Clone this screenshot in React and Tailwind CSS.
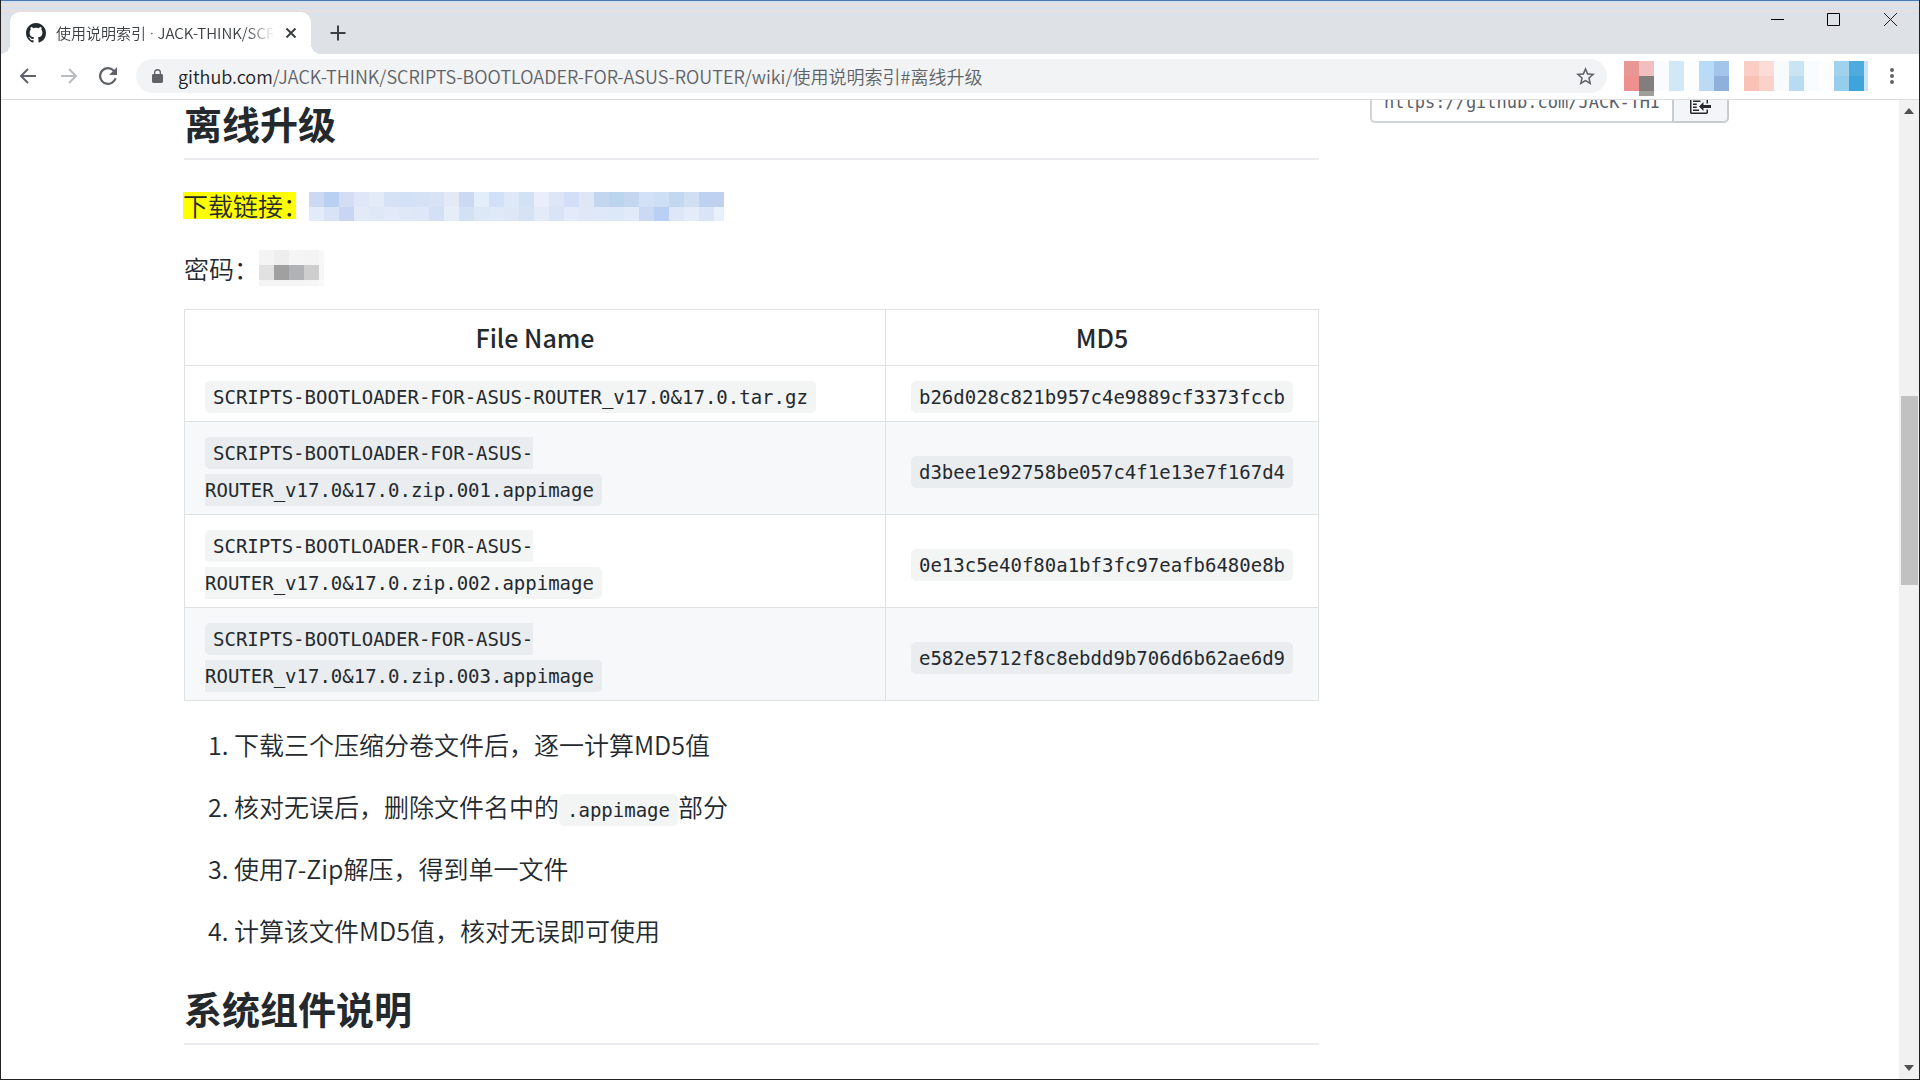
import React from "react";

const LINK_MOSAIC = [
  ["#cbdaf2", "#b9d0f2", "#d3def5", "#dee6f7", "#e4ebf8", "#d5e2f6", "#d3e1f7", "#d5e2f6", "#d8e4f5", "#e5e9f6", "#cbdaf2", "#e4edfa", "#d3e1f8", "#dfe8f8", "#d3e1f4", "#e9eefa", "#dde5f6", "#d3dff7", "#dfe7f7", "#c3d6f0", "#bcd5ef", "#c5d7f0", "#d3e1f7", "#cddff5", "#c2d8f1", "#d1dff4", "#bfd1f1", "#bfd1ef"],
  ["#e4ebf8", "#d9e3f6", "#c8d6f3", "#e2e9f7", "#dfe8f6", "#e2e9f8", "#dfe8f7", "#dee7f7", "#d3e0f5", "#e5edf9", "#d3e1f5", "#dde8f7", "#dfe9f7", "#dde7f6", "#d6e3f4", "#e3ebf8", "#d9e4f6", "#e3eaf9", "#e0e8f8", "#dfe8f8", "#dce7f7", "#e1eaf8", "#ccd9f4", "#b9cff3", "#dde7f7", "#e4ecf9", "#d9e5f7", "#e8f0fb"],
];

const PASSWORD_MOSAIC = [
  ["#f4f4f5", "#eeeeef", "#f5f5f5", "#f4f4f4", "#f8f8f8"],
  ["#e1e1e1", "#a0a0a0", "#b0b3b5", "#cecece", "#f6f6f6"],
  ["#f5f5f5", "#f5f5f5", "#f5f5f5", "#f6f6f6", "#f9f9f9"],
];

const EXTENSIONS = [
  ["#e99795", "#ef8f8e"],
  ["#f1bfbf", "#827e7d", "#9f9f9c"],
  ["#f9fbfe", "#f9fbfe"],
  ["#d3e8f7", "#d3e8f7"],
  ["#fcfdff", "#fcfdff"],
  ["#b9dbfa", "#bcdaf4"],
  ["#a3c5ea", "#8fb0da"],
  ["#ffffff", "#ffffff"],
  ["#fbcdc5", "#fac2b7"],
  ["#fbdcd6", "#fad2ca"],
  ["#f7fbfe", "#f7fbfe"],
  ["#c9e5f4", "#b7dcf2"],
  ["#f9fcfe", "#f9fcfe"],
  ["#fdfdff", "#fdfdff"],
  ["#a0d1ed", "#96cdec"],
  ["#4eabdd", "#40a4dc"],
];

const FILES = [
  ["SCRIPTS-BOOTLOADER-FOR-ASUS-ROUTER_v17.0&17.0.tar.gz", "b26d028c821b957c4e9889cf3373fccb"],
  ["SCRIPTS-BOOTLOADER-FOR-ASUS-ROUTER_v17.0&17.0.zip.001.appimage", "d3bee1e92758be057c4f1e13e7f167d4"],
  ["SCRIPTS-BOOTLOADER-FOR-ASUS-ROUTER_v17.0&17.0.zip.002.appimage", "0e13c5e40f80a1bf3fc97eafb6480e8b"],
  ["SCRIPTS-BOOTLOADER-FOR-ASUS-ROUTER_v17.0&17.0.zip.003.appimage", "e582e5712f8c8ebdd9b706d6b62ae6d9"],
];

const GITHUB_MARK =
  "M8 0C3.58 0 0 3.58 0 8c0 3.54 2.29 6.53 5.47 7.59.4.07.55-.17.55-.38 0-.19-.01-.82-.01-1.49-2.01.37-2.53-.49-2.69-.94-.09-.23-.48-.94-.82-1.13-.28-.15-.68-.52-.01-.53.63-.01 1.08.58 1.23.82.72 1.21 1.87.87 2.33.66.07-.52.28-.87.51-1.07-1.78-.2-3.64-.89-3.64-3.95 0-.87.31-1.59.82-2.15-.08-.2-.36-1.02.08-2.12 0 0 .67-.21 2.2.82.64-.18 1.32-.27 2-.27s1.36.09 2 .27c1.53-1.04 2.2-.82 2.2-.82.44 1.1.16 1.92.08 2.12.51.56.82 1.27.82 2.15 0 3.07-1.87 3.75-3.65 3.95.29.25.54.73.54 1.48 0 1.07-.01 1.93-.01 2.2 0 .21.15.46.55.38A8.01 8.01 0 0 0 16 8c0-4.42-3.58-8-8-8z";

function Mosaic({ rows, label, className }) {
  return (
    <span role="img" aria-label={label} className={`flex flex-col ${className}`}>
      {rows.map((row, r) => (
        <span key={r} className="flex h-[15px] last:h-auto last:flex-1">
          {row.map((color, c) => (
            <span key={c} className="w-[15px] last:flex-1" style={{ backgroundColor: color }} />
          ))}
        </span>
      ))}
    </span>
  );
}

function Code({ children }) {
  return (
    <code className="rounded-[5px] bg-[#1b1f23]/5 px-2 py-[5px] font-['DejaVu_Sans_Mono','Liberation_Mono',monospace] text-[19px] leading-none font-normal">
      {children}
    </code>
  );
}

function Heading({ children }) {
  return (
    <h2 className="border-b-2 border-[#eaecef] pb-[13px] text-[38px] leading-[45px] font-bold">{children}</h2>
  );
}

function TitleBar() {
  return (
    <header className="flex h-[54px] shrink-0 bg-[linear-gradient(#4a7aad_0_1px,#cfe0f1_1px_3px,#e4dfe1_3px_7px,#d3e2f0_7px_9px,#e4dfe1_9px_13px,#d6e2ee_13px_15px,#dee1e6_15px)] pl-[9px]">
      <div className="relative mt-3 flex w-[301px] items-center rounded-t-[10px] bg-white pl-4">
        <span className="absolute bottom-0 -left-[10px] size-[10px] bg-[radial-gradient(circle_at_0_0,transparent_10px,#fff_10px)]" />
        <span className="absolute -right-[10px] bottom-0 size-[10px] bg-[radial-gradient(circle_at_100%_0,transparent_10px,#fff_10px)]" />
        <svg viewBox="0 0 16 16" className="size-5 shrink-0" fill="#24292e"><path d={GITHUB_MARK} /></svg>
        <span className="ml-[10px] w-[218px] overflow-hidden mask-[linear-gradient(90deg,#000_190px,transparent_218px)] text-[15px] leading-6 whitespace-nowrap text-[#3c4043]">
          使用说明索引<span className="font-['Noto_Sans',sans-serif]"> · </span>JACK-THINK/SCRIPTS
        </span>
        <button aria-label="关闭标签页" className="ml-3">
          <svg viewBox="0 0 10 10" className="size-[10px]" stroke="#3c4043" strokeWidth="2"><path d="M0.5 0.5l9 9M9.5 0.5l-9 9" /></svg>
        </button>
      </div>
      <button aria-label="打开新标签页" className="mt-[11px] ml-[19px]">
        <svg viewBox="0 0 16 16" className="size-4" stroke="#3c4043" strokeWidth="2"><path d="M8 0.5v15M0.5 8h15" /></svg>
      </button>
      <div className="ml-auto flex h-[38px] items-center">
        <button aria-label="最小化" className="flex h-full w-[56px] items-center justify-center">
          <svg viewBox="0 0 13 13" className="size-[13px]"><path d="M0 6.5h13" stroke="#000" /></svg>
        </button>
        <button aria-label="最大化" className="flex h-full w-[56px] items-center justify-center">
          <svg viewBox="0 0 13 13" className="size-[13px]" fill="none"><path d="M0.5 0.5h12v12h-12z" stroke="#000" /></svg>
        </button>
        <button aria-label="关闭" className="flex h-full w-[58px] items-center justify-center">
          <svg viewBox="0 0 13 13" className="size-[13px]"><path d="M0 0l13 13M13 0L0 13" stroke="#222" /></svg>
        </button>
      </div>
    </header>
  );
}

function Toolbar() {
  return (
    <div className="flex h-[46px] shrink-0 items-center border-b border-[#dadce0] bg-white pb-px pl-[18px]">
      <button aria-label="后退">
        <svg viewBox="0 0 18 16" className="h-4 w-[18px]" fill="none" stroke="#5f6368" strokeWidth="2"><path d="M17 8H2M9 1L2 8l7 7" /></svg>
      </button>
      <button aria-label="前进" className="ml-[23px]" disabled>
        <svg viewBox="0 0 18 16" className="h-4 w-[18px]" fill="none" stroke="#b9bbbe" strokeWidth="2"><path d="M1 8h15M9 1l7 7-7 7" /></svg>
      </button>
      <button aria-label="重新加载" className="ml-[21px]">
        <svg viewBox="4 4 16 16" className="size-[18px]" fill="#5f6368"><path d="M17.65 6.35A7.96 7.96 0 0 0 12 4a8 8 0 1 0 7.73 10h-2.08A6 6 0 1 1 12 6c1.66 0 3.14.69 4.22 1.78L13 11h7V4l-2.35 2.35z" /></svg>
      </button>
      <div className="ml-[19px] flex h-[34px] min-w-0 flex-1 items-center rounded-full bg-[#f1f3f4] pr-3 pl-4">
        <svg viewBox="0 0 11 14" className="h-[14px] w-[11px] shrink-0" fill="#5f6368"><path d="M9.5 5H9V3.6a3.5 3.5 0 0 0-7 0V5h-.5A1.4 1.4 0 0 0 0 6.4V12.6A1.4 1.4 0 0 0 1.4 14h8.2A1.4 1.4 0 0 0 11 12.6V6.4A1.4 1.4 0 0 0 9.5 5zM3.3 5V3.6a2.2 2.2 0 0 1 4.4 0V5z" /></svg>
        <a href="#离线升级" className="ml-[15px] flex-1 truncate text-[18px] leading-[26px] text-[#5f6368]">
          <span className="text-[#202124]">github.com</span>/JACK-THINK/SCRIPTS-BOOTLOADER-FOR-ASUS-ROUTER/wiki/使用说明索引#离线升级
        </a>
        <button aria-label="为此标签页添加书签">
          <svg viewBox="2 2 20 19" className="h-[18px] w-[19px]" fill="#5f6368"><path d="M22 9.24l-7.19-.62L12 2 9.19 8.63 2 9.24l5.46 4.73L5.82 21 12 17.27 18.18 21l-1.63-7.03L22 9.24zM12 15.4l-3.76 2.27 1-4.28-3.32-2.88 4.38-.38L12 6.1l1.71 4.04 4.38.38-3.32 2.88 1 4.28L12 15.4z" /></svg>
        </button>
      </div>
      <div className="ml-[17px] flex h-[30px]" role="img" aria-label="扩展程序">
        {EXTENSIONS.map((cells, i) => (
          <span key={i} className="flex w-[15px] flex-col">
            {cells.map((color, j) => (
              <span key={j} className="h-[15px] shrink-0 nth-3:h-[5px]" style={{ backgroundColor: color }} />
            ))}
          </span>
        ))}
        <span className="w-1 bg-[#c9e5f6]" />
      </div>
      <button aria-label="菜单" className="mr-[25px] ml-[22px]">
        <svg viewBox="0 0 4 16" className="h-4 w-1" fill="#5f6368"><circle cx="2" cy="2" r="2" /><circle cx="2" cy="8" r="2" /><circle cx="2" cy="14" r="2" /></svg>
      </button>
    </div>
  );
}

function FileTable() {
  return (
    <table className="mt-[23px] w-full table-fixed border-collapse">
      <colgroup><col className="w-auto" /><col className="w-[433px]" /></colgroup>
      <thead>
        <tr>
          <th className="border border-[#dfe2e5] px-5 py-[9px] font-medium">File Name</th>
          <th className="border border-[#dfe2e5] px-5 py-[9px] font-medium">MD5</th>
        </tr>
      </thead>
      <tbody>
        {FILES.map(([name, md5]) => (
          <tr key={md5} className="even:bg-[#f6f8fa]">
            <td className="border border-[#dfe2e5] px-5 py-[9px]"><Code>{name}</Code></td>
            <td className="border border-[#dfe2e5] px-5 py-[9px] text-center"><Code>{md5}</Code></td>
          </tr>
        ))}
      </tbody>
    </table>
  );
}

function CloneBox() {
  return (
    <aside className="-mt-3 flex h-[35px] w-[359px] shrink-0">
      <input
        readOnly
        aria-label="克隆地址"
        value="https://github.com/JACK-THINK/SCRIPTS-BOOTLOADER-FOR-ASUS-ROUTER.wiki.git"
        className="min-w-0 flex-1 rounded-bl-[5px] border-2 border-r-0 border-[#d1d5da] bg-white px-3 pb-[6px] font-['DejaVu_Sans_Mono','Liberation_Mono',monospace] text-[17px] font-normal text-[#586069]"
      />
      <button aria-label="复制" className="flex w-[57px] items-center justify-center rounded-br-[5px] border-2 border-[#c9cccf] bg-[#f3f5f8] pb-2">
        <svg viewBox="0 0 14 16" className="h-6 w-[21px]" fill="#24292e"><path fillRule="evenodd" d="M2 13h4v1H2v-1zm5-6H2v1h5V7zm2 3V8l-3 3 3 3v-2h5v-2H9zM4.5 9H2v1h2.500V9zM2 12h2.500v-1H2v1zm9 1h1v2c-.02.28-.11.52-.3.7-.19.18-.42.28-.7.3H1c-.55 0-1-.45-1-1V4c0-.55.45-1 1-1h3c0-1.110.89-2 2-2 1.110 0 2 .89 2 2h3c.55 0 1 .45 1 1v5h-1V6H1v9h10v-2zM2 5h8c0-.55-.45-1-1-1H8c-.55 0-1-.45-1-1s-.45-1-1-1-1 .45-1 1-.45 1-1 1H3c-.55 0-1 .45-1 1z" /></svg>
      </button>
    </aside>
  );
}

function Scrollbar() {
  return (
    <div aria-hidden="true" className="flex w-5 shrink-0 flex-col items-center bg-[#f1f1f1] py-2">
      <svg viewBox="0 0 10 6" className="h-[6px] w-[10px]" fill="#505050"><path d="M0 6l5-6 5 6z" /></svg>
      <span className="mt-[282px] h-[189px] w-[17px] bg-[#c1c1c1]" />
      <svg viewBox="0 0 10 6" className="mt-auto h-[6px] w-[10px]" fill="#505050"><path d="M0 0l5 6 5-6z" /></svg>
    </div>
  );
}

export default function App() {
  return (
    <div className="flex h-screen flex-col overflow-hidden border-r border-b border-l border-[#222] bg-white font-['Noto_Sans_CJK_SC',sans-serif] font-[350] text-[#24292e]">
      <TitleBar />
      <Toolbar />
      <div className="flex min-h-0 flex-1">
        <div className="flex min-w-0 flex-1 items-start gap-[51px] overflow-hidden pr-[170px] pl-[183px]">
          <article className="min-w-0 flex-1 text-[25px] leading-[37px]">
            <Heading>离线升级</Heading>
            <p className="mt-8 flex items-start">
              <mark className="mr-[13px] -ml-px w-[113px] bg-[#ffff00] leading-[27px] whitespace-nowrap text-[#24292e]">下载链接：</mark>
              <Mosaic rows={LINK_MOSAIC} label="下载链接" className="h-[29px] w-[415px]" />
            </p>
            <p className="mt-[29px] flex items-center leading-[36px]">
              密码：
              <Mosaic rows={PASSWORD_MOSAIC} label="密码" className="h-9 w-[65px]" />
            </p>
            <FileTable />
            <ol className="mt-[25px] list-decimal space-y-[25px] pl-[50px]">
              <li>下载三个压缩分卷文件后，逐一计算MD5值</li>
              <li>核对无误后，删除文件名中的<Code>.appimage</Code>部分</li>
              <li>使用7-Zip解压，得到单一文件</li>
              <li>计算该文件MD5值，核对无误即可使用</li>
            </ol>
            <div className="mt-9"><Heading>系统组件说明</Heading></div>
          </article>
          <CloneBox />
        </div>
        <Scrollbar />
      </div>
    </div>
  );
}
